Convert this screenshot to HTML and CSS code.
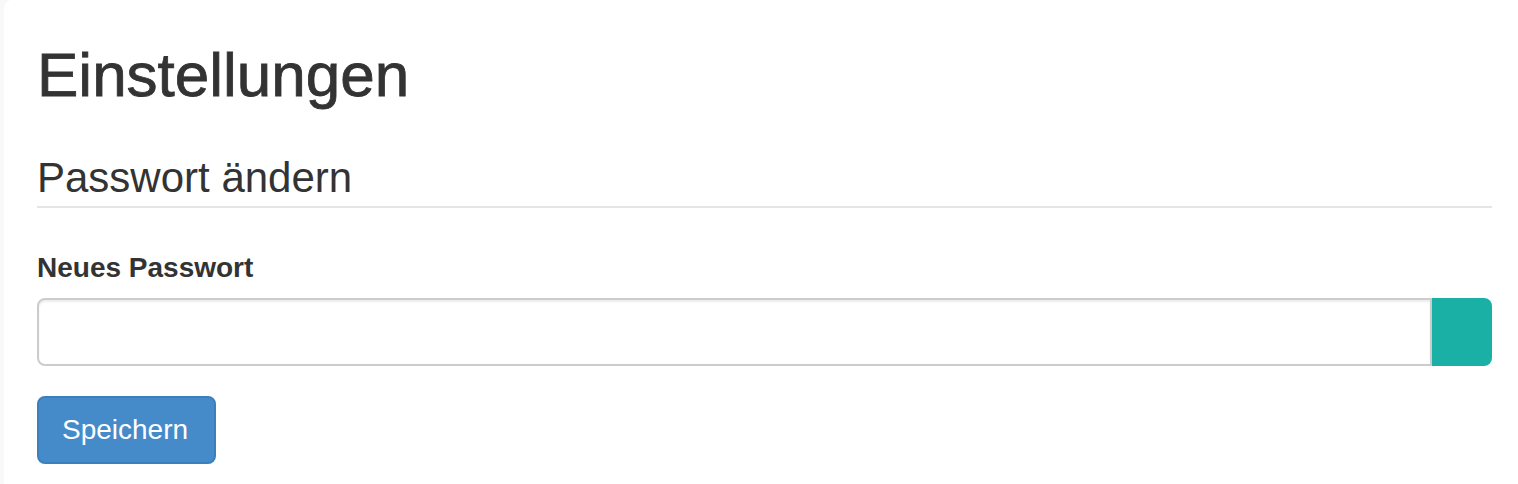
FILE: index.html
```html
<!DOCTYPE html>
<html lang="de">
<head>
    <meta charset="UTF-8">
    <meta name="viewport" content="width=device-width, initial-scale=1.0">
    <title>Einstellungen</title>
    <link rel="stylesheet" href="styles.css">
</head>
<body>
    <div class="panel">
        <h1>Einstellungen</h1>
        <h3 class="section-title">Passwort ändern</h3>
        <form class="settings-form">
            <div class="form-group">
                <label for="password">Neues Passwort</label>
                <div class="input-group">
                    <input type="password" id="password">
                    <span class="input-addon"></span>
                </div>
            </div>
            <button type="submit" class="btn-primary">Speichern</button>
        </form>
    </div>
</body>
</html>
```

FILE: styles.css
```css
body {
    margin: 0;
    background: #f8f8f8;
    font-family: 'Liberation Sans', Arial, sans-serif;
    color: #333;
}

.panel {
    margin-left: 4px;
    background: #fff;
    border-top-left-radius: 8px;
    min-height: 100vh;
    padding: 42px 26px 0 33px;
    box-sizing: border-box;
}

h1 {
    font-size: 62px;
    font-weight: 500;
    line-height: 66px;
    margin: 0 0 48px 0;
    -webkit-text-stroke: 0.8px #333;
}

.section-title {
    font-size: 42px;
    font-weight: 400;
    line-height: 44px;
    margin: 0;
    padding-bottom: 6px;
    border-bottom: 2px solid #e5e5e5;
}

.settings-form {
    margin-top: 40px;
}

label {
    display: block;
    font-size: 28px;
    font-weight: bold;
    line-height: 40px;
    margin-bottom: 10px;
}

.input-group {
    display: flex;
    height: 68px;
}

.input-group input {
    flex: 1;
    margin: 0;
    border: 2px solid #ccc;
    border-radius: 8px 0 0 8px;
    box-shadow: inset 0 2px 2px rgba(0, 0, 0, 0.075);
    font-family: inherit;
    font-size: 28px;
    padding: 0 24px;
    outline: none;
}

.input-addon {
    width: 60px;
    background: #1ab0a6;
    border-radius: 0 8px 8px 0;
}

.btn-primary {
    margin-top: 30px;
    height: 68px;
    padding: 0 26px 0 23px;
    font-family: inherit;
    font-size: 28px;
    color: #fff;
    background: #458bca;
    border: 2px solid #3b7fbd;
    border-radius: 8px;
    cursor: pointer;
}
```
